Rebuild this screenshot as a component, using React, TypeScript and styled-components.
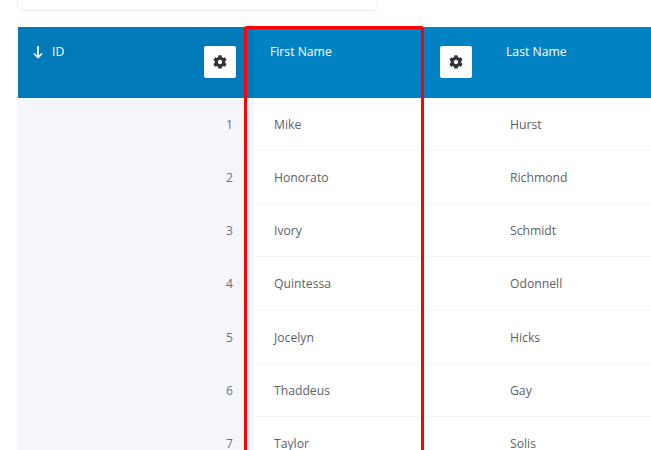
import * as React from "react"
import styled, { createGlobalStyle } from "styled-components"
import { FaCog } from "react-icons/fa"

const rows = [
  { id: 1, first: "Mike", last: "Hurst" },
  { id: 2, first: "Honorato", last: "Richmond" },
  { id: 3, first: "Ivory", last: "Schmidt" },
  { id: 4, first: "Quintessa", last: "Odonnell" },
  { id: 5, first: "Jocelyn", last: "Hicks" },
  { id: 6, first: "Thaddeus", last: "Gay" },
  { id: 7, first: "Taylor", last: "Solis" },
]

const App: React.FunctionComponent = () => (
  <Page>
    <GlobalStyle />
    <SearchBox />
    <TableWrap>
      <Table>
        <thead>
          <tr>
            <HeadCell $sorted>
              <HeadInner>
                <SortLabel>
                  <svg width="10" height="14" viewBox="0 0 10 14" fill="none" stroke="#fff" strokeWidth="1.7">
                    <path d="M5 1v11.5M1 8.5l4 4 4-4" />
                  </svg>
                  ID
                </SortLabel>
                <GearButton><FaCog size={14} /></GearButton>
              </HeadInner>
            </HeadCell>
            <HeadCell>
              <HeadInner>
                First Name
                <GearButton><FaCog size={14} /></GearButton>
              </HeadInner>
            </HeadCell>
            <HeadCell>Last Name</HeadCell>
          </tr>
        </thead>
        <tbody>
          {rows.map((r) => (
            <tr key={r.id}>
              <IdCell>{r.id}</IdCell>
              <BodyCell>{r.first}</BodyCell>
              <BodyCell>{r.last}</BodyCell>
            </tr>
          ))}
        </tbody>
      </Table>
      <Highlight />
    </TableWrap>
  </Page>
)

const GlobalStyle = createGlobalStyle`
  html, body {
    margin: 0;
    background: #fff;
    overflow: hidden;
  }
`

const Page = styled.div`
  width: 651px;
  height: 450px;
  overflow: hidden;
  padding-left: 18px;
  box-sizing: border-box;
  font-family: "Open Sans", "Noto Sans", sans-serif;
  font-size: 12.2px;
`

const SearchBox = styled.div`
  width: 361px;
  height: 11px;
  margin-left: -1px;
  box-sizing: border-box;
  background: #fff;
  border: 1px solid #eeeff1;
  border-top: none;
  border-radius: 0 0 5px 5px;
`

const TableWrap = styled.div`
  position: relative;
  width: 708px;
  margin-top: 16px;
`

const Table = styled.table`
  width: 708px;
  table-layout: fixed;
  border-collapse: separate;
  border-spacing: 0;
`

const HeadCell = styled.th<{ $sorted?: boolean }>`
  height: 71px;
  width: 236px;
  padding: 16px 18px 0 16px;
  box-sizing: border-box;
  vertical-align: top;
  text-align: left;
  font-weight: 400;
  line-height: 17px;
  color: #fff;
  background: ${(p) => (p.$sorted ? "#007ab8" : "#0082c3")};
`

const HeadInner = styled.div`
  display: flex;
  justify-content: space-between;
  align-items: flex-start;
`

const SortLabel = styled.span`
  display: flex;
  align-items: center;
  gap: 9px;
  margin-left: -1px;
  svg {
    flex: none;
  }
`

const GearButton = styled.div`
  display: flex;
  align-items: center;
  justify-content: center;
  width: 32px;
  height: 32px;
  margin-top: 3px;
  border-radius: 2px;
  background: #fff;
  color: #2f3338;
`

const BodyCell = styled.td`
  height: 53.15px;
  padding: 0.8px 20px 0;
  box-sizing: border-box;
  color: #5c6166;
  border-bottom: 1px solid #f3f4f6;
`

const IdCell = styled.td`
  height: 53.15px;
  padding: 0 21px 0 0;
  box-sizing: border-box;
  text-align: right;
  color: #6b7178;
  background: #f4f6fb;
  box-shadow: -1px 0 0 #f4f6fb;
`

const Highlight = styled.div`
  position: absolute;
  top: -1px;
  left: 226px;
  width: 180px;
  height: 460px;
  box-sizing: border-box;
  border: 3px solid #ff0000;
  border-radius: 3px;
  pointer-events: none;
`

export default App
